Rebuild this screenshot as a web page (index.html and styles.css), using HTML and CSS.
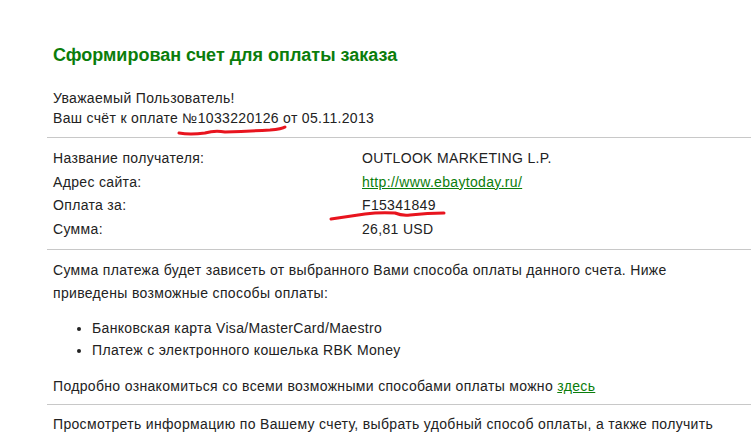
FILE: index.html
```
<!DOCTYPE html>
<html lang="ru">

<head>
    <meta charset="UTF-8">
    <meta name="viewport" content="width=device-width, initial-scale=1.0">
    <title>Счет</title>
    <link rel="stylesheet" href="styles.css">
</head>

<body>
    <div class="page">
        <h1 class="title">Сформирован счет для оплаты заказа</h1>

        <div class="block greeting">
            <div>Уважаемый Пользователь!</div>
            <div>Ваш счёт к оплате №1033220126 от 05.11.2013</div>
        </div>

        <div class="block info">
            <div class="row"><span class="label">Название получателя:</span><span>OUTLOOK MARKETING L.P.</span></div>
            <div class="row"><span class="label">Адрес сайта:</span><a href="#">http://www.ebaytoday.ru/</a></div>
            <div class="row"><span class="label">Оплата за:</span><span>F15341849</span></div>
            <div class="row"><span class="label">Сумма:</span><span>26,81 USD</span></div>
        </div>

        <div class="block methods">
            <p class="text">Сумма платежа будет зависеть от выбранного Вами способа оплаты данного счета. Ниже приведены возможные способы оплаты:</p>
            <ul class="list">
                <li>Банковская карта Visa/MasterCard/Maestro</li>
                <li>Платеж с электронного кошелька RBK Money</li>
            </ul>
            <p class="more">Подробно ознакомиться со всеми возможными способами оплаты можно <a href="#">здесь</a></p>
        </div>

        <div class="block last">
            <p class="text">Просмотреть информацию по Вашему счету, выбрать удобный способ оплаты, а также получить</p>
        </div>
    </div>

    <!-- красные пометки от руки -->
    <svg class="marks" width="751" height="435" viewBox="0 0 751 435">
        <path d="M179 133 Q 190 135 205 133 Q 215 130 225 132 Q 250 131 270 130 Q 282 129 285 127" />
        <path d="M331 219 Q 345 217 365 214 Q 380 212 395 213 Q 402 216 410 215 Q 428 213 444 213" />
    </svg>
</body>

</html>
```

FILE: styles.css
```
body {
    margin: 0;
    padding: 0;
    background-color: #ffffff;
    font-family: 'Liberation Sans', Arial, sans-serif;
    font-size: 14px;
    letter-spacing: 0.33px;
    color: #222;
}

.page {
    margin-left: 47px;
    padding-top: 44px;
}

.title {
    margin: 0 0 0 6px;
    font-size: 18px;
    line-height: 22px;
    letter-spacing: 0;
    color: #0b7d0b;
}

.block {
    padding-left: 6px;
    border-bottom: 1px solid #c8c8c8;
}

.greeting {
    padding-top: 22px;
    padding-bottom: 9px;
    line-height: 20px;
}

.info {
    padding-top: 9px;
    padding-bottom: 8px;
}

.row {
    display: flex;
    line-height: 23.5px;
}

.label {
    width: 309px;
}

a {
    color: #0b7d0b;
}

.text {
    margin: 0;
    line-height: 23px;
    padding-right: 20px;
}

.methods {
    padding-top: 9px;
    padding-bottom: 7px;
}

.list {
    margin: 12px 0 0 0;
    padding-left: 39px;
    line-height: 22px;
}

.more {
    margin: 14px 0 0 0;
    line-height: 22px;
}

.last {
    border-bottom: none;
    padding-top: 8px;
}

.marks {
    position: absolute;
    left: 0;
    top: 0;
    pointer-events: none;
}

.marks path {
    fill: none;
    stroke: #e8141e;
    stroke-width: 3;
    stroke-linecap: round;
}
```
